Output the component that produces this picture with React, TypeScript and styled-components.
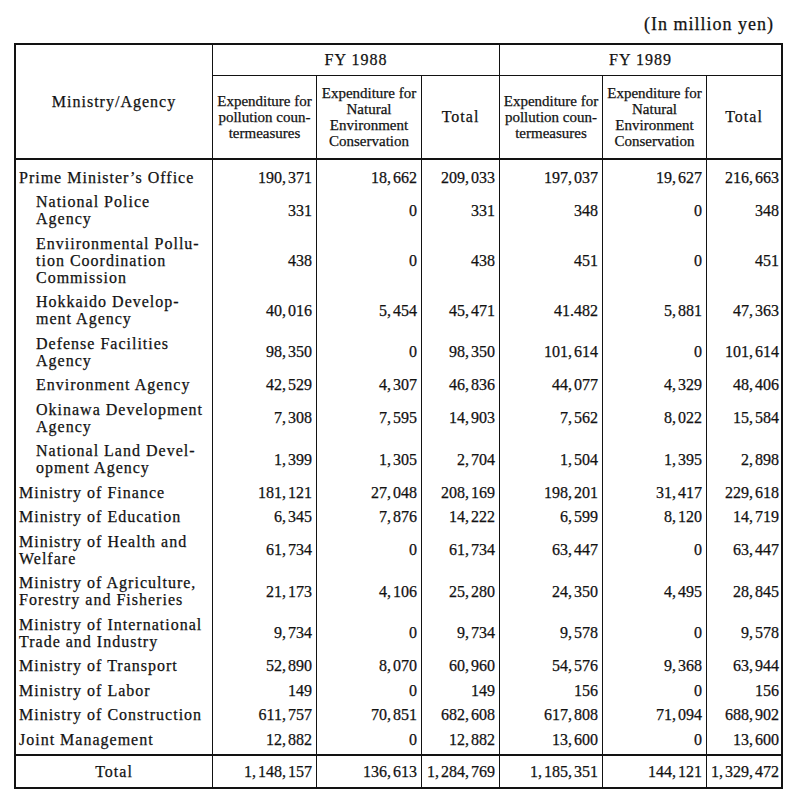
import React from "react";
import styled, { createGlobalStyle } from "styled-components";

const INK = "#121212";

const GlobalStyle = createGlobalStyle`
  *, *::before, *::after { box-sizing: border-box; }
  html, body { margin: 0; padding: 0; background: #ffffff; }
  body {
    font-family: "Liberation Serif", "Times New Roman", serif;
    color: ${INK};
    -webkit-text-stroke: 0.25px ${INK};
  }
`;

const Page = styled.div`
  width: 800px;
  padding: 14px 0 14px 14px;
`;

const Unit = styled.div`
  width: 769px;
  padding-right: 9px;
  text-align: right;
  font-size: 18px;
  line-height: 20px;
  letter-spacing: 1px;
  margin-bottom: 9px;
`;

const Grid = styled.div`
  width: 769px;
  display: grid;
  grid-template-columns: 197px 104px 105px 78px 103px 104px 74px;
  grid-template-rows: 31px 84px;
  grid-auto-rows: auto;
  border: 2px solid ${INK};
  font-size: 16px;
  letter-spacing: 1px;
`;

const HeadCell = styled.div<{ $span?: number; $rows?: number; $bottom: number; $edge?: boolean }>`
  grid-column: span ${(p) => p.$span ?? 1};
  grid-row: span ${(p) => p.$rows ?? 1};
  display: flex;
  align-items: center;
  justify-content: center;
  text-align: center;
  line-height: 18px;
  border-right: ${(p) => (p.$edge ? "none" : `1px solid ${INK}`)};
  border-bottom: ${(p) => p.$bottom}px solid ${INK};
`;

const SubHead = styled.div`
  font-size: 15px;
  line-height: 16px;
  letter-spacing: 0;
`;

const Line = styled.span`
  display: block;
`;

const LabelCell = styled.div<{ $indent?: boolean; $first?: boolean; $last?: boolean }>`
  padding-top: ${(p) => (p.$first ? 8.5 : 3.75)}px;
  padding-bottom: ${(p) => (p.$last ? 6.5 : 3.75)}px;
  padding-left: ${(p) => (p.$indent ? 20 : 3)}px;
  line-height: 17px;
  white-space: nowrap;
  border-right: 1px solid ${INK};
`;

const NumCell = styled.div<{ $first?: boolean; $last?: boolean; $edge?: boolean }>`
  display: flex;
  align-items: center;
  justify-content: flex-end;
  padding-top: ${(p) => (p.$first ? 8.5 : 3.75)}px;
  padding-bottom: ${(p) => (p.$last ? 6.5 : 3.75)}px;
  padding-right: ${(p) => (p.$edge ? 2 : 4)}px;
  line-height: 17px;
  letter-spacing: 0;
  white-space: nowrap;
  border-right: ${(p) => (p.$edge ? "none" : `1px solid ${INK}`)};
`;

const TotalCell = styled.div<{ $label?: boolean; $edge?: boolean }>`
  height: 33px;
  display: flex;
  align-items: center;
  justify-content: ${(p) => (p.$label ? "center" : "flex-end")};
  padding-right: ${(p) => (p.$label ? 0 : p.$edge ? 2 : 4)}px;
  letter-spacing: ${(p) => (p.$label ? 1 : 0)}px;
  white-space: nowrap;
  border-top: 2px solid ${INK};
  border-right: ${(p) => (p.$edge ? "none" : `1px solid ${INK}`)};
`;

const Comma = styled.span`
  padding-right: 2px;
`;

type Row = { label: string[]; indent?: boolean; v: string[] };

const rows: Row[] = [
  { label: ["Prime Minister\u2019s Office"], v: ["190,371", "18,662", "209,033", "197,037", "19,627", "216,663"] },
  { label: ["National Police", "Agency"], indent: true, v: ["331", "0", "331", "348", "0", "348"] },
  { label: ["Enviironmental Pollu-", "tion Coordination", "Commission"], indent: true, v: ["438", "0", "438", "451", "0", "451"] },
  { label: ["Hokkaido Develop-", "ment Agency"], indent: true, v: ["40,016", "5,454", "45,471", "41.482", "5,881", "47,363"] },
  { label: ["Defense Facilities", "Agency"], indent: true, v: ["98,350", "0", "98,350", "101,614", "0", "101,614"] },
  { label: ["Environment Agency"], indent: true, v: ["42,529", "4,307", "46,836", "44,077", "4,329", "48,406"] },
  { label: ["Okinawa Development", "Agency"], indent: true, v: ["7,308", "7,595", "14,903", "7,562", "8,022", "15,584"] },
  { label: ["National Land Devel-", "opment Agency"], indent: true, v: ["1,399", "1,305", "2,704", "1,504", "1,395", "2,898"] },
  { label: ["Ministry of Finance"], v: ["181,121", "27,048", "208,169", "198,201", "31,417", "229,618"] },
  { label: ["Ministry of Education"], v: ["6,345", "7,876", "14,222", "6,599", "8,120", "14,719"] },
  { label: ["Ministry of Health and", "Welfare"], v: ["61,734", "0", "61,734", "63,447", "0", "63,447"] },
  { label: ["Ministry of Agriculture,", "Forestry and Fisheries"], v: ["21,173", "4,106", "25,280", "24,350", "4,495", "28,845"] },
  { label: ["Ministry of International", "Trade and Industry"], v: ["9,734", "0", "9,734", "9,578", "0", "9,578"] },
  { label: ["Ministry of Transport"], v: ["52,890", "8,070", "60,960", "54,576", "9,368", "63,944"] },
  { label: ["Ministry of Labor"], v: ["149", "0", "149", "156", "0", "156"] },
  { label: ["Ministry of Construction"], v: ["611,757", "70,851", "682,608", "617,808", "71,094", "688,902"] },
  { label: ["Joint Management"], v: ["12,882", "0", "12,882", "13,600", "0", "13,600"] },
];

const totals = ["1,148,157", "136,613", "1,284,769", "1,185,351", "144,121", "1,329,472"];

const Num: React.FC<{ value: string }> = ({ value }) => {
  const parts = value.split(",");
  return (
    <span>
      {parts.map((p, i) => (
        <React.Fragment key={i}>
          {p}
          {i < parts.length - 1 && <Comma>,</Comma>}
        </React.Fragment>
      ))}
    </span>
  );
};

const SubHeaders: React.FC<{ edge?: boolean }> = ({ edge }) => (
  <>
    <HeadCell $bottom={2}>
      <SubHead>
        <Line>Expenditure for</Line>
        <Line>pollution coun-</Line>
        <Line>termeasures</Line>
      </SubHead>
    </HeadCell>
    <HeadCell $bottom={2}>
      <SubHead>
        <Line>Expenditure for</Line>
        <Line>Natural</Line>
        <Line>Environment</Line>
        <Line>Conservation</Line>
      </SubHead>
    </HeadCell>
    <HeadCell $bottom={2} $edge={edge}>Total</HeadCell>
  </>
);

export default function App() {
  return (
    <>
      <GlobalStyle />
      <Page>
        <Unit>(In million yen)</Unit>
        <Grid>
          <HeadCell $rows={2} $bottom={2}>Ministry/Agency</HeadCell>
          <HeadCell $span={3} $bottom={1}>FY 1988</HeadCell>
          <HeadCell $span={3} $bottom={1} $edge>FY 1989</HeadCell>
          <SubHeaders />
          <SubHeaders edge />

          {rows.map((r, ri) => {
            const first = ri === 0;
            const last = ri === rows.length - 1;
            return (
              <React.Fragment key={ri}>
                <LabelCell $indent={r.indent} $first={first} $last={last}>
                  {r.label.map((l, li) => (
                    <Line key={li}>{l}</Line>
                  ))}
                </LabelCell>
                {r.v.map((v, vi) => (
                  <NumCell key={vi} $first={first} $last={last} $edge={vi === r.v.length - 1}>
                    <Num value={v} />
                  </NumCell>
                ))}
              </React.Fragment>
            );
          })}

          <TotalCell $label>Total</TotalCell>
          {totals.map((t, ti) => (
            <TotalCell key={ti} $edge={ti === totals.length - 1}>
              <Num value={t} />
            </TotalCell>
          ))}
        </Grid>
      </Page>
    </>
  );
}
